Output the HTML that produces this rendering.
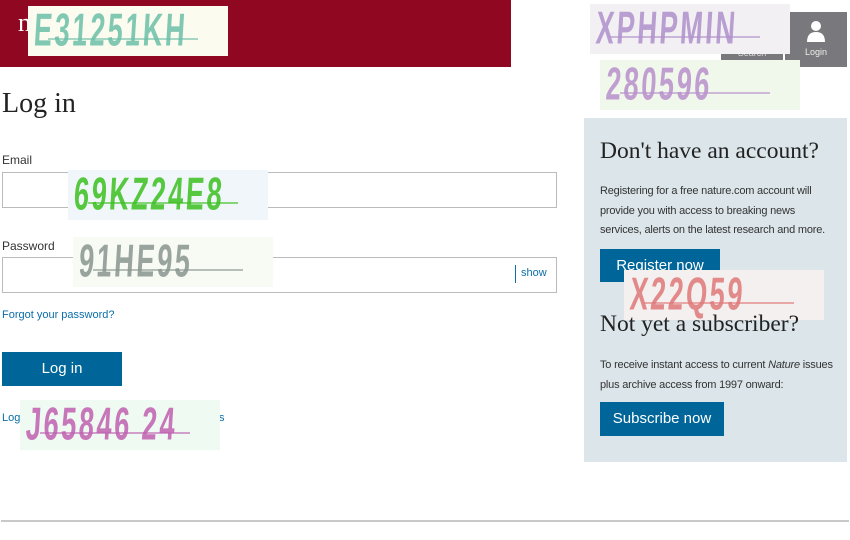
<!DOCTYPE html>
<html><head><meta charset="utf-8"><style>
*{margin:0;padding:0;box-sizing:border-box}
body{width:850px;height:540px;background:#fff;position:relative;overflow:hidden;font-family:"Liberation Sans",sans-serif;color:#222}
.a{position:absolute}
.cap{position:absolute;width:200px;height:50px;overflow:hidden;font-family:"Liberation Sans Narrow","Liberation Sans",sans-serif;font-weight:bold;font-size:44px;line-height:50px;padding-left:6px;white-space:nowrap}
.cap span{display:inline-block;transform:scaleX(0.62) scaleY(1.05) skewX(-6deg);transform-origin:left center;letter-spacing:4px;opacity:.85}
.cap:after{content:"";position:absolute;left:20px;right:30px;top:32px;height:2px;background:currentColor;opacity:.6}
.sm{font-size:12px;color:#333}
.btn{position:absolute;background:#006699;color:#fff;font-size:15px;text-align:center}
.serif{font-family:"Liberation Serif",serif}
.p{font-size:11px;line-height:19.5px;color:#333;letter-spacing:-0.2px;white-space:nowrap}
</style></head><body>
<div class="a" style="left:0;top:0;width:511px;height:67px;background:#8f0720"></div>
<div class="a serif" style="left:18px;top:8px;color:#fff;font-size:26px">n</div>
<div class="cap" style="left:28px;top:6px;background:#fcfbf0;color:#6cc0a8"><span>E31251KH</span></div>

<div class="a" style="left:721px;top:12px;width:62px;height:48px;background:#79787c;color:#ddd;font-size:9px;text-align:center;padding-top:36px">Search</div>
<div class="a" style="left:785px;top:12px;width:62px;height:55px;background:#79787c;color:#eee;font-size:9px;text-align:center">
<svg width="20" height="24" viewBox="0 0 20 24" style="margin-top:8px"><circle cx="10" cy="6" r="5" fill="#fff"/><path d="M1 22 Q1 12 10 12 Q19 12 19 22 Z" fill="#fff"/></svg>
<div style="margin-top:1px">Login</div></div>
<div class="cap" style="left:590px;top:4px;background:#f2f0f2;color:#b090cc"><span>XPHPMIN</span></div>
<div class="cap" style="left:600px;top:60px;background:#f0f8ec;color:#b890cc"><span>280596</span></div>

<div class="a serif" style="left:2px;top:88px;font-size:28px;color:#222">Log in</div>
<div class="a sm" style="left:2px;top:153px">Email</div>
<div class="a" style="left:2px;top:172px;width:555px;height:36px;border:1px solid #bbb"></div>
<div class="cap" style="left:68px;top:170px;background:#f0f6fa;color:#3cc020"><span>69KZ24E8</span></div>
<div class="a sm" style="left:2px;top:239px">Password</div>
<div class="a" style="left:2px;top:257px;width:555px;height:36px;border:1px solid #bbb"></div>
<div class="a" style="left:515px;top:265px;width:1px;height:18px;background:#0a6ea8"></div>
<div class="a" style="left:521px;top:267px;font-size:11px;color:#0a6ea8">show</div>
<div class="cap" style="left:73px;top:237px;background:#f8fbf4;color:#8a9690"><span>91HE95</span></div>
<div class="a" style="left:2px;top:309px;font-size:11px;color:#0a6ea8">Forgot your password?</div>
<div class="btn" style="left:2px;top:352px;width:120px;height:34px;line-height:34px">Log in</div>
<div class="a" style="left:2px;top:412px;font-size:11px;color:#0a6ea8">Log</div>
<div class="a" style="left:219px;top:412px;font-size:11px;color:#0a6ea8">s</div>
<div class="cap" style="left:20px;top:400px;background:#eefaf2;color:#c060b0"><span>J65846 24</span></div>

<div class="a" style="left:584px;top:118px;width:263px;height:344px;background:#dbe5ea"></div>
<div class="a serif" style="left:600px;top:138px;font-size:23.5px;color:#222">Don't have an account?</div>
<div class="a p" style="left:600px;top:182px">Registering for a free nature.com account will<br>provide you with access to breaking news<br>services, alerts on the latest research and more.</div>
<div class="btn" style="left:600px;top:249px;width:120px;height:33px;line-height:33px">Register now</div>
<div class="cap" style="left:624px;top:270px;background:#f4f0f0;color:#e07878"><span>X22Q59</span></div>
<div class="a serif" style="left:600px;top:311px;font-size:23.5px;color:#222">Not yet a subscriber?</div>
<div class="a p" style="left:600px;top:356px">To receive instant access to current <i>Nature</i> issues<br>plus archive access from 1997 onward:</div>
<div class="btn" style="left:600px;top:402px;width:124px;height:34px;line-height:34px">Subscribe now</div>

<div class="a" style="left:1px;top:520px;width:848px;height:2px;background:#c8c8c8"></div>
</body></html>
